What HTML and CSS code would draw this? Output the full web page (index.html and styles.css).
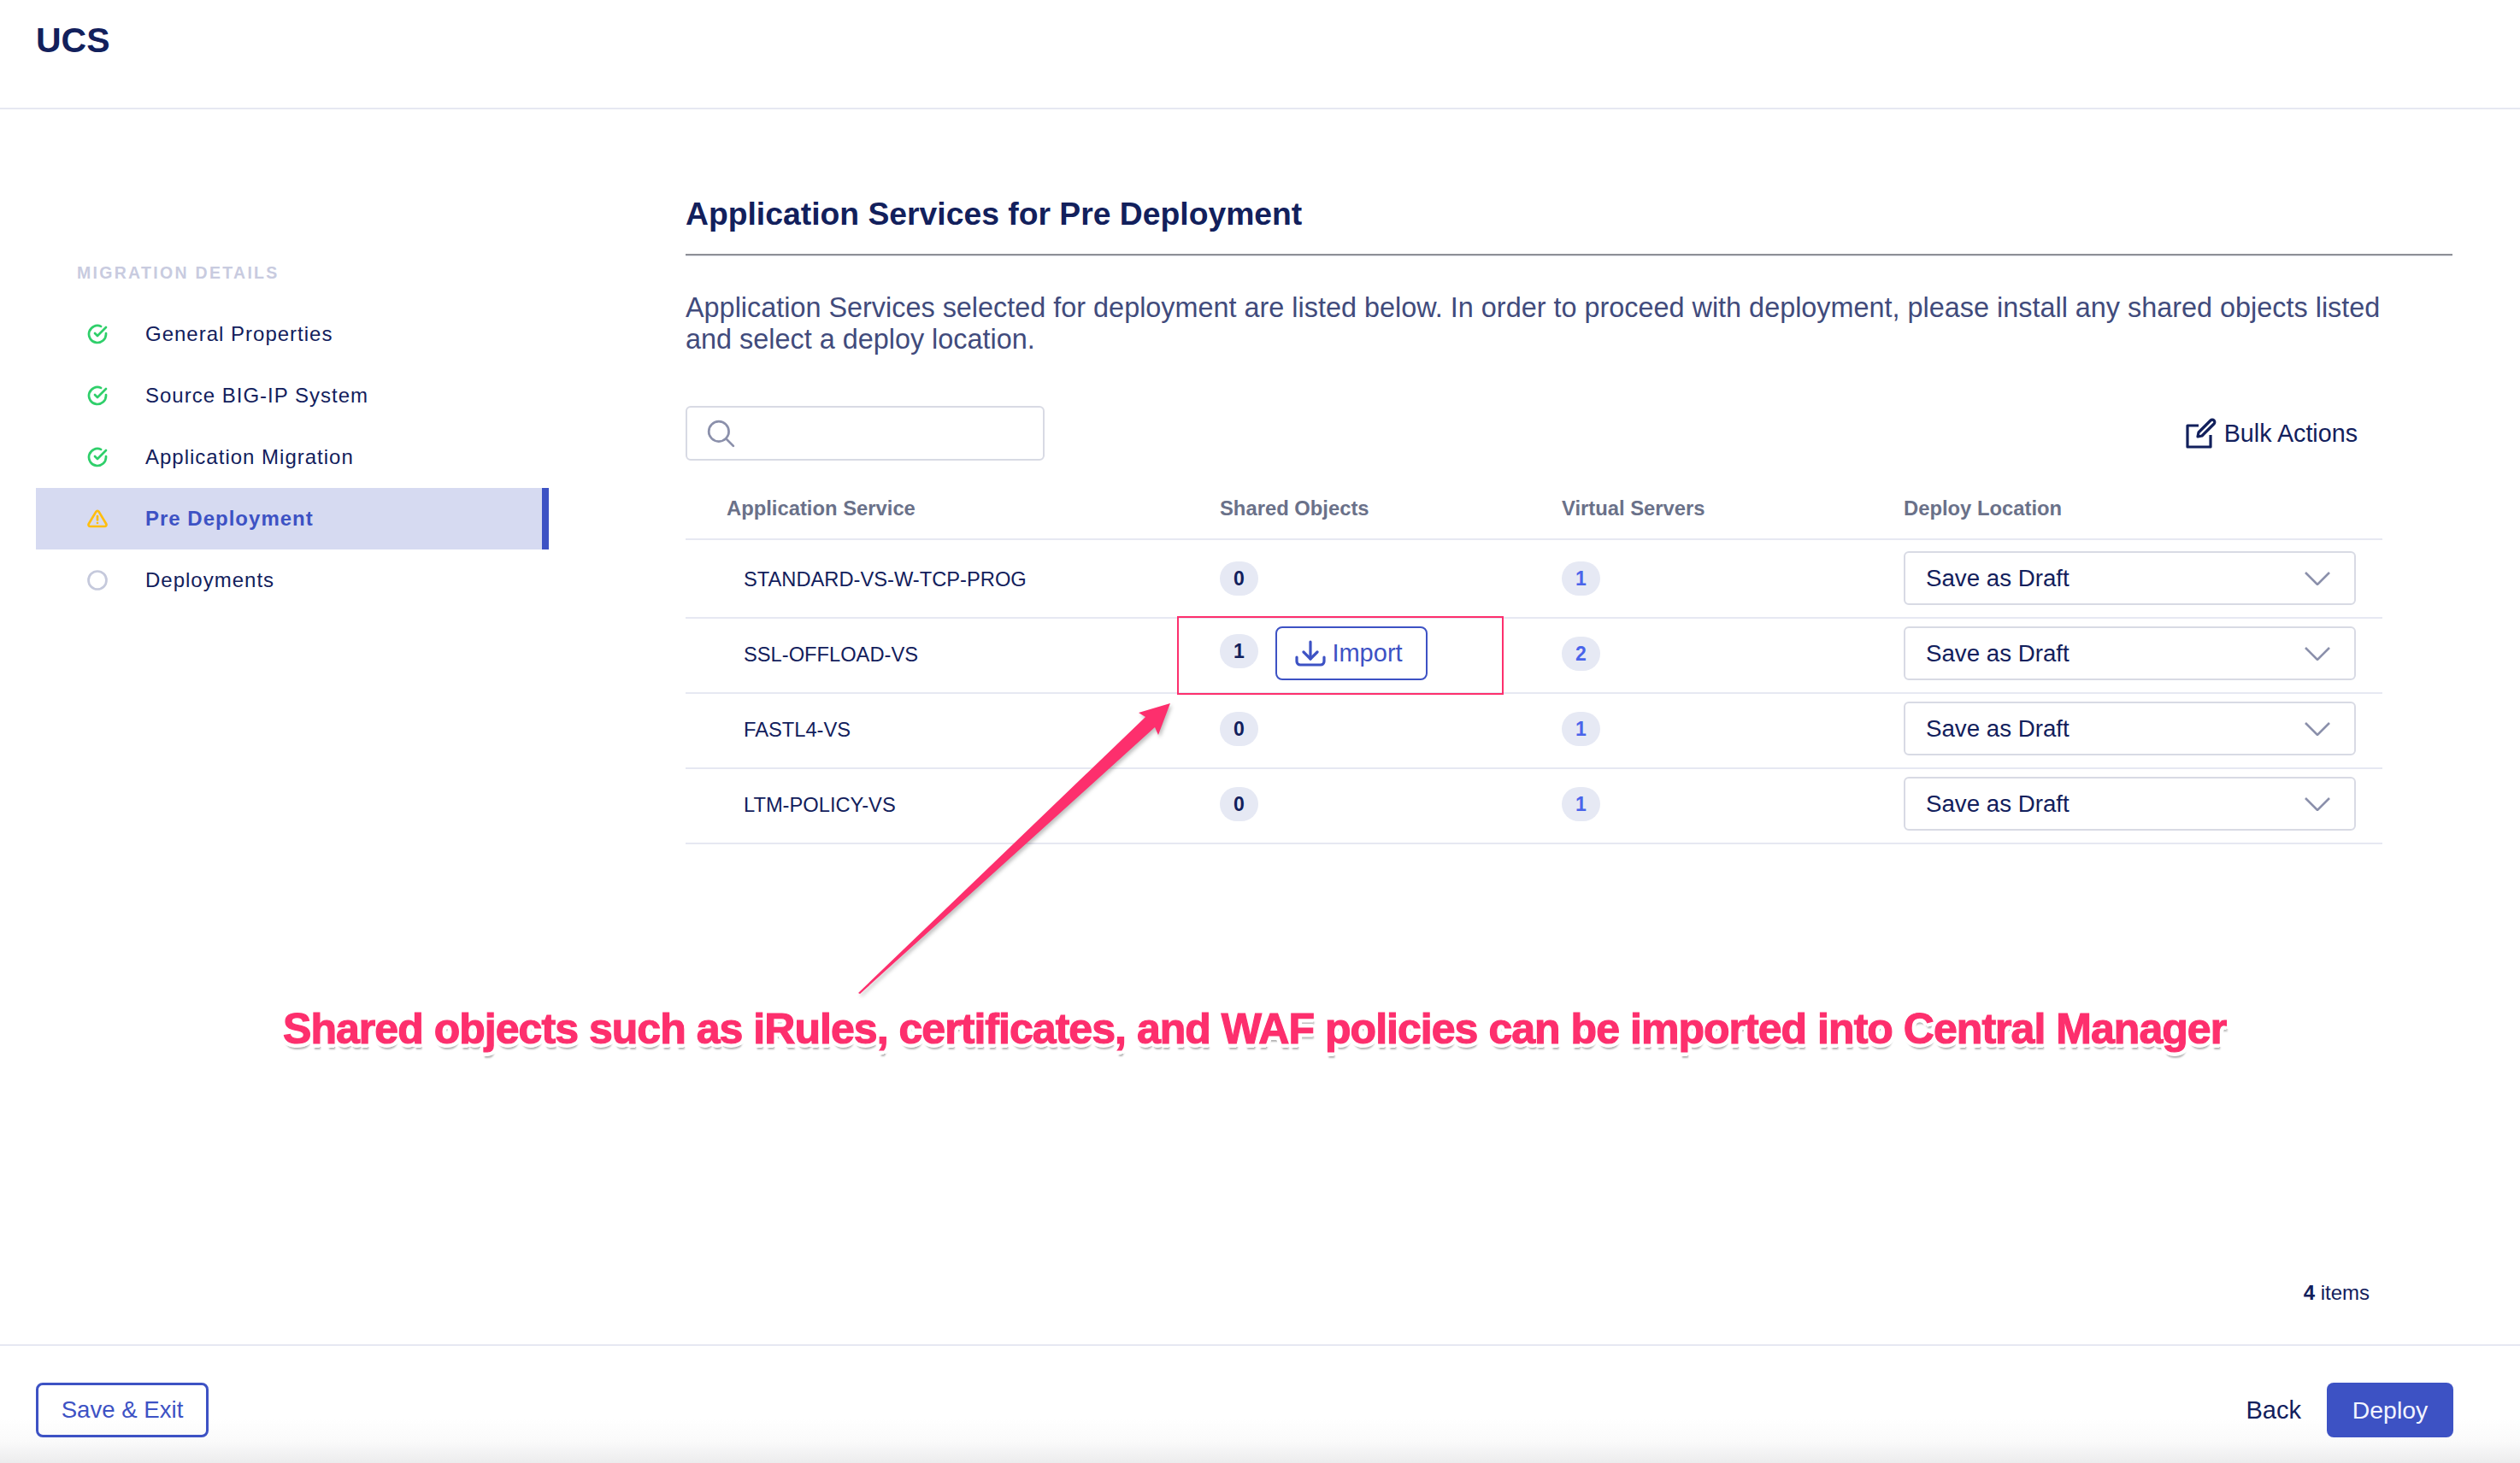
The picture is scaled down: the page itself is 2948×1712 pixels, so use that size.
FILE: index.html
```html
<!DOCTYPE html>
<html lang="en">

<head>
    <meta charset="UTF-8">
    <title>UCS - Pre Deployment</title>
    <link rel="stylesheet" href="styles.css">
</head>

<body>
    <div class="app">
        <header class="top-bar">
            <h1>UCS</h1>
        </header>

        <div class="content">
            <nav class="steps">
                <div class="steps-title">MIGRATION DETAILS</div>
                <div class="step">
                    <svg class="step-icon icon-done" viewBox="0 0 24 24"><path d="M22 11.08V12a10 10 0 1 1-5.93-9.14"/><path d="M22 4 12 14.01l-3-3"/></svg>
                    <span>General Properties</span>
                </div>
                <div class="step">
                    <svg class="step-icon icon-done" viewBox="0 0 24 24"><path d="M22 11.08V12a10 10 0 1 1-5.93-9.14"/><path d="M22 4 12 14.01l-3-3"/></svg>
                    <span>Source BIG-IP System</span>
                </div>
                <div class="step">
                    <svg class="step-icon icon-done" viewBox="0 0 24 24"><path d="M22 11.08V12a10 10 0 1 1-5.93-9.14"/><path d="M22 4 12 14.01l-3-3"/></svg>
                    <span>Application Migration</span>
                </div>
                <div class="step step-active">
                    <svg class="step-icon icon-warn" viewBox="0 0 24 24"><path d="M10.3 3.9 1.8 18a2 2 0 0 0 1.7 3h17a2 2 0 0 0 1.7-3L13.7 3.9a2 2 0 0 0-3.4 0z"/><path d="M12 9v4.5"/><path d="M12 17h.01"/></svg>
                    <span>Pre Deployment</span>
                </div>
                <div class="step">
                    <svg class="step-icon icon-todo" viewBox="0 0 24 24"><circle cx="12" cy="12" r="10.5"/></svg>
                    <span>Deployments</span>
                </div>
            </nav>

            <main class="main">
                <h2>Application Services for Pre Deployment</h2>
                <p class="intro">Application Services selected for deployment are listed below. In order to proceed with deployment, please install any shared objects listed and select a deploy location.</p>

                <div class="toolbar">
                    <div class="search">
                        <svg class="search-icon" viewBox="0 0 32 32"><circle cx="14" cy="14" r="11"/><path d="m22 22 8 8"/></svg>
                    </div>
                    <div class="bulk">
                        <svg class="bulk-icon" viewBox="0 0 36 36"><path d="M15 9H2v25h27V20"/><path d="M15 17 29 3a2.6 2.6 0 0 1 4 4L19 21l-5 1z"/></svg>
                        <span>Bulk Actions</span>
                    </div>
                </div>

                <table class="services">
                    <thead>
                        <tr>
                            <th class="col-name">Application Service</th>
                            <th class="col-shared">Shared Objects</th>
                            <th class="col-virtual">Virtual Servers</th>
                            <th class="col-deploy">Deploy Location</th>
                        </tr>
                    </thead>
                    <tbody>
                        <tr>
                            <td class="name">STANDARD-VS-W-TCP-PROG</td>
                            <td><span class="badge">0</span></td>
                            <td><span class="badge badge-link">1</span></td>
                            <td><div class="select">Save as Draft<svg class="chevron" viewBox="0 0 30 16"><path d="m1 1 14 14L29 1"/></svg></div></td>
                        </tr>
                        <tr>
                            <td class="name">SSL-OFFLOAD-VS</td>
                            <td>
                                <div class="shared-cell">
                                    <span class="badge">1</span>
                                    <button class="btn-import">
                                        <svg viewBox="0 0 36 32"><path d="M18 2v20"/><path d="m10 14 8 8 8-8"/><path d="M2 20v5a4 4 0 0 0 4 4h24a4 4 0 0 0 4-4v-5"/></svg>
                                        Import
                                    </button>
                                </div>
                            </td>
                            <td><span class="badge badge-link">2</span></td>
                            <td><div class="select">Save as Draft<svg class="chevron" viewBox="0 0 30 16"><path d="m1 1 14 14L29 1"/></svg></div></td>
                        </tr>
                        <tr>
                            <td class="name">FASTL4-VS</td>
                            <td><span class="badge">0</span></td>
                            <td><span class="badge badge-link">1</span></td>
                            <td><div class="select">Save as Draft<svg class="chevron" viewBox="0 0 30 16"><path d="m1 1 14 14L29 1"/></svg></div></td>
                        </tr>
                        <tr>
                            <td class="name">LTM-POLICY-VS</td>
                            <td><span class="badge">0</span></td>
                            <td><span class="badge badge-link">1</span></td>
                            <td><div class="select">Save as Draft<svg class="chevron" viewBox="0 0 30 16"><path d="m1 1 14 14L29 1"/></svg></div></td>
                        </tr>
                    </tbody>
                </table>

                <div class="count"><b>4</b> items</div>
            </main>
        </div>

        <footer class="bottom-bar">
            <button class="btn btn-outline">Save &amp; Exit</button>
            <div class="bottom-right">
                <button class="btn btn-plain">Back</button>
                <button class="btn btn-primary">Deploy</button>
            </div>
        </footer>

        <!-- Anotaciones encima de la captura -->
        <div class="callout-box"></div>
        <svg class="callout-arrow" viewBox="0 0 400 360">
            <path d="M4 345 L340 22 L332 17 L369 6 L355 43 L351 34 L6 346 Z"/>
        </svg>
        <div class="callout-text">Shared objects such as iRules, certificates, and WAF policies can be imported into Central Manager</div>
    </div>
</body>

</html>
```

FILE: styles.css
```css
:root {
    --navy: #12205c;
    --blue: #3d52c4;
    --link: #4a64ea;
    --line: #e6e8f2;
    --pink: #fd2f6d;
}

* {
    margin: 0;
    padding: 0;
    box-sizing: border-box;
}

body {
    font-family: 'Liberation Sans', Arial, sans-serif;
    color: var(--navy);
    background: #fff;
}

.app {
    position: relative;
    width: 2948px;
    height: 1712px;
    display: flex;
    flex-direction: column;
    overflow: hidden;
}

.top-bar {
    height: 128px;
    padding: 23px 42px 0;
    border-bottom: 2px solid var(--line);
}

.top-bar h1 {
    font-size: 41px;
    line-height: 48px;
    font-weight: 700;
}

.content {
    flex: 1;
    display: flex;
    min-height: 0;
}

.steps {
    width: 802px;
    flex-shrink: 0;
    padding: 179px 160px 0 42px;
}

.steps-title {
    font-size: 19.5px;
    line-height: 24px;
    font-weight: 700;
    letter-spacing: 2.3px;
    color: #c8cbdf;
    padding-left: 48px;
    margin-bottom: 24px;
}

.step {
    height: 72px;
    display: flex;
    align-items: center;
    font-size: 24px;
    letter-spacing: 1px;
}

.step-icon {
    width: 24px;
    height: 24px;
    margin: 0 44px 0 60px;
    fill: none;
    stroke-width: 2.7;
    stroke-linecap: round;
    stroke-linejoin: round;
}

.icon-done { stroke: #2fcf6a; }
.icon-warn { stroke: #ffbe0f; }
.icon-todo { stroke: #c5c9dc; }

.step-active {
    background: #d6daf1;
    border-right: 8px solid var(--blue);
    color: var(--blue);
    font-weight: 700;
}

.main {
    flex: 1;
    display: flex;
    flex-direction: column;
    padding: 98px 79px 0 0;
    min-width: 0;
}

.main h2 {
    font-size: 37.3px;
    line-height: 48px;
    font-weight: 700;
    padding-bottom: 23px;
    border-bottom: 2px solid #8e9096;
    box-shadow: 0 1px 0 #e3e5ec;
}

.intro {
    width: 1985px;
    margin-top: 43px;
    font-size: 32.4px;
    line-height: 37px;
    color: #414b7c;
}

.toolbar {
    width: 1985px;
    display: flex;
    align-items: center;
    justify-content: space-between;
    margin-top: 59px;
    padding-right: 29px;
}

.search {
    width: 420px;
    height: 64px;
    border: 2px solid #d8dae4;
    border-radius: 6px;
    display: flex;
    align-items: center;
    padding-left: 22px;
}

.search-icon {
    width: 34px;
    height: 34px;
    fill: none;
    stroke: #8b90ab;
    stroke-width: 2.6;
    stroke-linecap: round;
}

.bulk {
    display: flex;
    align-items: center;
    gap: 9px;
    font-size: 28.7px;
}

.bulk-icon {
    width: 36px;
    height: 36px;
    fill: none;
    stroke: var(--navy);
    stroke-width: 3.2;
    stroke-linejoin: round;
}

.services {
    width: 1985px;
    margin-top: 21px;
    border-collapse: separate;
    border-spacing: 0;
    table-layout: fixed;
}

.services th {
    height: 72px;
    text-align: left;
    font-size: 23.8px;
    font-weight: 700;
    color: #6a7189;
    border-bottom: 2px solid var(--line);
}

.col-name { width: 625px; padding-left: 48px; }
.col-shared { width: 400px; }
.col-virtual { width: 400px; }

.services td {
    height: 88px;
    padding: 9px 0 14px;
    font-size: 23.7px;
    border-bottom: 2px solid var(--line);
    vertical-align: middle;
}

.services tbody tr:first-child td {
    height: 92px;
    padding-top: 13px;
}

.services td.name {
    padding-left: 68px;
    padding-bottom: 11px;
}

.badge {
    display: inline-block;
    width: 45px;
    height: 40px;
    line-height: 40px;
    border-radius: 20px;
    background: #e6e9f4;
    text-align: center;
    font-size: 23px;
    font-weight: 700;
    vertical-align: middle;
}

.badge-link {
    color: var(--link);
}

.shared-cell {
    display: flex;
    align-items: flex-start;
    gap: 20px;
}

.shared-cell .badge {
    margin-top: 9px;
}

.btn-import {
    width: 178px;
    height: 63px;
    padding-right: 6px;
    background: #fff;
    border: 2px solid var(--blue);
    border-radius: 8px;
    color: var(--blue);
    font: inherit;
    font-size: 29px;
    display: flex;
    align-items: center;
    justify-content: center;
    gap: 7px;
}

.btn-import svg {
    width: 36px;
    height: 32px;
    fill: none;
    stroke: var(--blue);
    stroke-width: 3.2;
    stroke-linecap: round;
    stroke-linejoin: round;
}

.select {
    width: 529px;
    height: 63px;
    border: 2px solid #d8dae4;
    border-radius: 6px;
    padding: 0 24px;
    display: flex;
    align-items: center;
    justify-content: space-between;
    font-size: 27.7px;
}

.chevron {
    width: 30px;
    height: 16px;
    margin-right: 4px;
    fill: none;
    stroke: #8b90ab;
    stroke-width: 2.6;
}

.count {
    margin-top: auto;
    margin-bottom: 46px;
    width: 1970px;
    text-align: right;
    font-size: 24px;
}

.bottom-bar {
    position: relative;
    height: 139px;
    padding: 43px 78px 30px 42px;
    border-top: 2px solid var(--line);
    background: linear-gradient(180deg, #fff 0%, #fff 62%, #fafafa 82%, #ececed 100%);
    display: flex;
    justify-content: space-between;
}

.bottom-right {
    display: flex;
    align-items: center;
    gap: 30px;
}

.btn {
    height: 64px;
    border-radius: 8px;
    font-family: inherit;
    font-size: 29px;
    cursor: pointer;
}

.btn-outline {
    width: 202px;
    font-size: 27.6px;
    background: transparent;
    border: 3px solid var(--blue);
    color: var(--blue);
}

.btn-plain {
    background: none;
    border: none;
    color: var(--navy);
}

.btn-primary {
    width: 148px;
    font-size: 28.4px;
    background: var(--blue);
    border: none;
    color: #f2f4ff;
}

.callout-box {
    position: absolute;
    left: 1377px;
    top: 721px;
    width: 382px;
    height: 92px;
    border: 2px solid var(--pink);
}

.callout-arrow {
    position: absolute;
    left: 1000px;
    top: 817px;
    width: 400px;
    height: 360px;
    fill: var(--pink);
    filter: drop-shadow(2px 3px 2px rgba(0, 0, 0, 0.25));
}

.callout-text {
    position: absolute;
    left: 331px;
    top: 1174px;
    font-size: 50px;
    line-height: 60px;
    font-weight: 700;
    letter-spacing: -0.96px;
    white-space: nowrap;
    color: var(--pink);
    -webkit-text-stroke: 1.2px var(--pink);
    text-shadow:
        5px 0 0 #fff, -5px 0 0 #fff, 0 5px 0 #fff, 0 -5px 0 #fff,
        4px 3px 0 #fff, -4px 3px 0 #fff, 4px -3px 0 #fff, -4px -3px 0 #fff,
        3px 4px 0 #fff, -3px 4px 0 #fff, 3px -4px 0 #fff, -3px -4px 0 #fff,
        1px 7px 2px rgba(0, 0, 0, 0.3);
}
```
